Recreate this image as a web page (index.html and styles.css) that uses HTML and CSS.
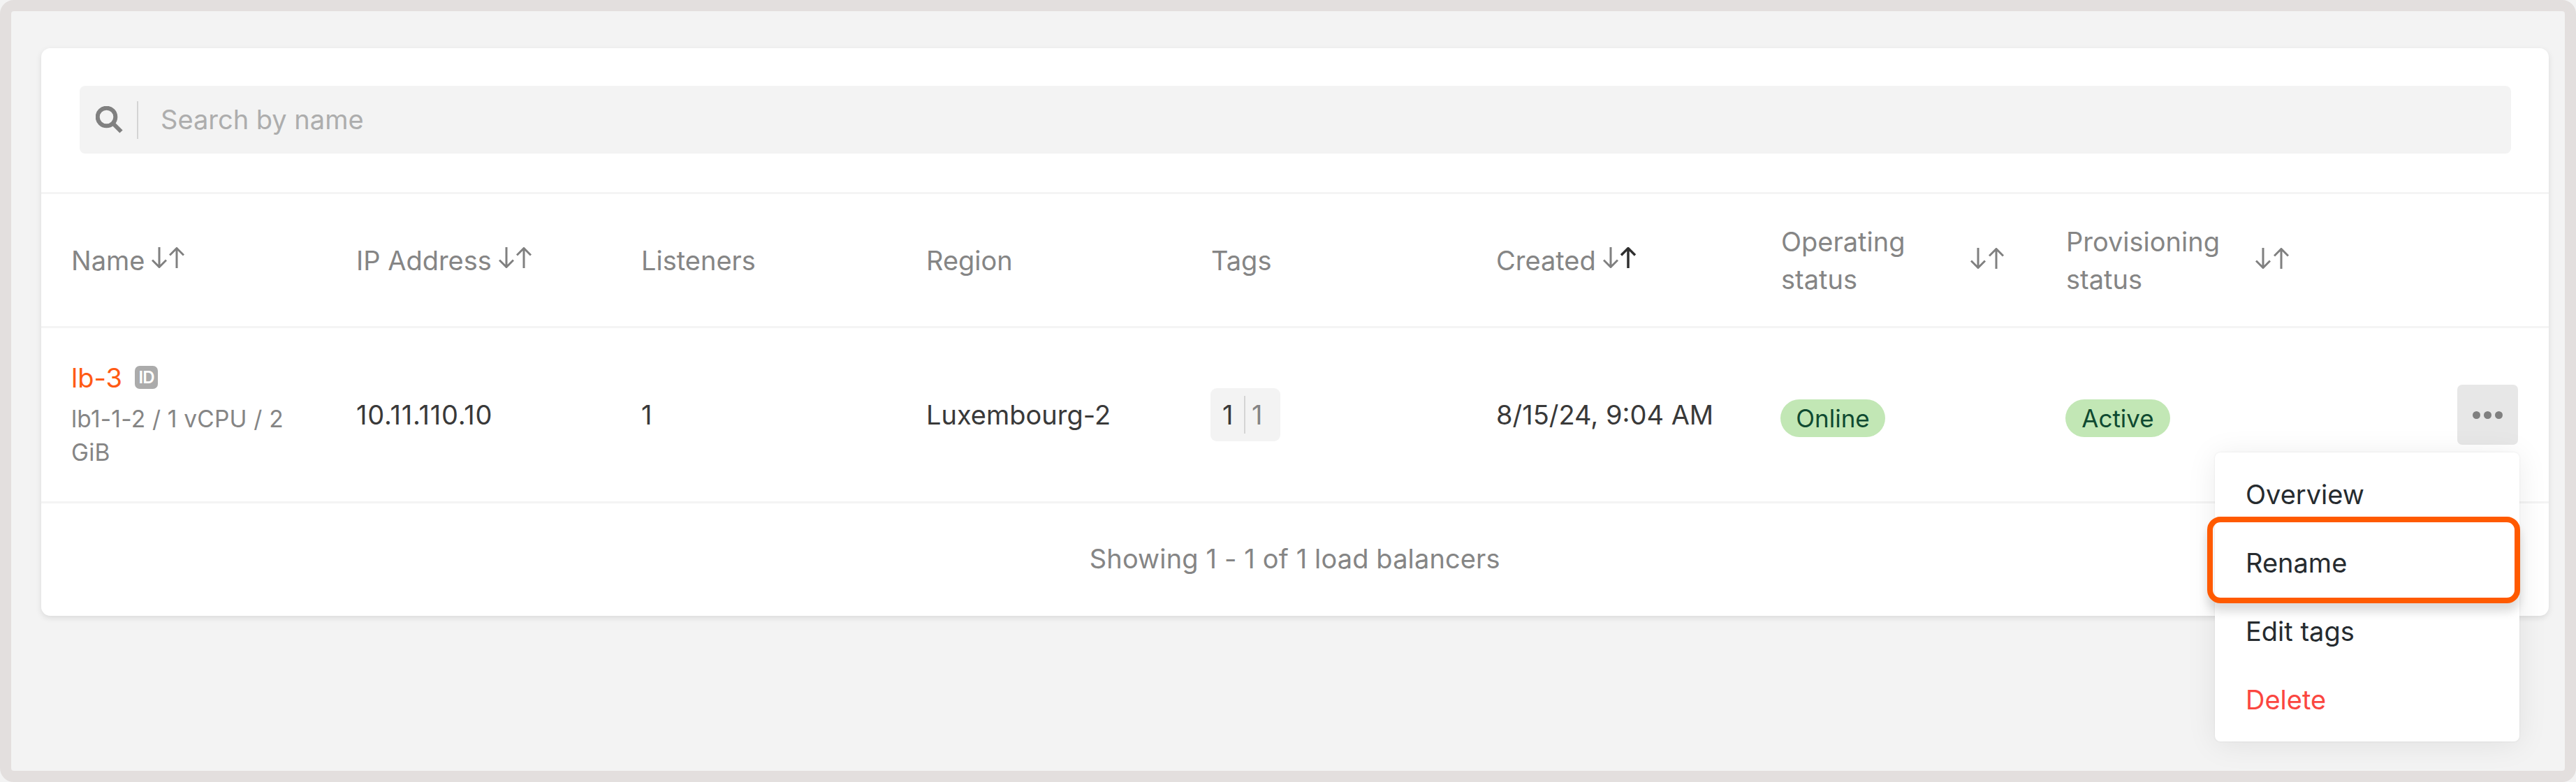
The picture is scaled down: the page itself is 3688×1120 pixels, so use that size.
FILE: index.html
```
<!DOCTYPE html>
<html lang="en">
<head>
<meta charset="utf-8">
<title>Load balancers</title>
<link rel="stylesheet" href="styles.css">
</head>
<body>
<svg class="sprite" aria-hidden="true">
  <symbol id="arrow-down" viewBox="0 0 22 30"><path d="M11 0V29M1 18.500L11 28.500L21 18.500"/></symbol>
  <symbol id="arrow-up" viewBox="0 0 22 30"><path d="M11 30V1M1 11.500L11 1.500L21 11.500"/></symbol>
</svg>
<main class="frame">
  <section class="card">
    <div class="search-area">
      <div class="search">
        <svg class="search-icon" viewBox="0 0 39 39"><circle cx="15.500" cy="15.500" r="12.800"/><path d="M25 25L36.500 36.500"/></svg>
        <span class="search-text">Search by name</span>
      </div>
    </div>
    <div class="row head">
      <div class="cell">Name<span class="sort"><svg><use href="#arrow-down"/></svg><svg><use href="#arrow-up"/></svg></span></div>
      <div class="cell">IP Address<span class="sort"><svg><use href="#arrow-down"/></svg><svg><use href="#arrow-up"/></svg></span></div>
      <div class="cell">Listeners</div>
      <div class="cell">Region</div>
      <div class="cell">Tags</div>
      <div class="cell">Created<span class="sort"><svg><use href="#arrow-down"/></svg><svg class="on"><use href="#arrow-up"/></svg></span></div>
      <div class="cell"><span class="wrap">Operating status</span><span class="sort"><svg><use href="#arrow-down"/></svg><svg><use href="#arrow-up"/></svg></span></div>
      <div class="cell"><span class="wrap">Provisioning status</span><span class="sort"><svg><use href="#arrow-down"/></svg><svg><use href="#arrow-up"/></svg></span></div>
    </div>
    <div class="row item">
      <div class="cell name">
        <div class="title"><a class="link">lb-3</a><span class="id">ID</span></div>
        <div class="flavor">lb1-1-2 / 1 vCPU / 2 GiB</div>
      </div>
      <div class="cell ip">10.11.110.10</div>
      <div class="cell">1</div>
      <div class="cell">Luxembourg-2</div>
      <div class="cell"><div class="tags"><span class="tag-count">1</span><span class="tag-more">1</span></div></div>
      <div class="cell">8/15/24, 9:04 AM</div>
      <div class="cell"><span class="pill">Online</span></div>
      <div class="cell"><span class="pill">Active</span></div>
      <div class="actions">
        <div class="more"><i></i><i></i><i></i></div>
        <div class="menu">
          <div class="option">Overview</div>
          <div class="option marked">Rename</div>
          <div class="option">Edit tags</div>
          <div class="option danger">Delete</div>
        </div>
      </div>
    </div>
    <div class="footer">Showing 1 - 1 of 1 load balancers</div>
  </section>
</main>
</body>
</html>
```
FILE: styles.css
```
*, *::after { box-sizing: border-box; }
body {
  margin: 0;
  background: #f3f3f3;
  color: #393939;
  font: 38px/54px Inter, "Liberation Sans", sans-serif;
}
.sprite { display: none; }
.frame {
  height: 1120px;
  padding: 53px 23px 0 42.5px;
  border: 16px solid #e3dfde;
  border-radius: 20px;
  background: #f3f3f3;
  overflow: hidden;
}
.card {
  height: 812.500px;
  display: flex;
  flex-direction: column;
  background: #fff;
  border-radius: 13px;
  box-shadow: 0 3px 8px rgba(0, 0, 0, .1);
}
.search-area { padding: 54px 54px 55px 55px; }
.search {
  display: flex;
  align-items: center;
  height: 97px;
  padding-left: 23px;
  border-radius: 8px;
  background: #f3f3f3;
}
.search-icon {
  width: 39px;
  height: 39px;
  fill: none;
  stroke: #808080;
  stroke-width: 6;
}
.search-text {
  margin-left: 20px;
  padding-left: 32.5px;
  border-left: 2px solid #d4d4d4;
  color: #adadad;
  line-height: 52px;
  padding-bottom: 2px;
}
.row {
  display: grid;
  grid-template-columns: repeat(8, 408px) 1fr;
  align-items: center;
  padding: 0 44px 0 43.500px;
  border-top: 3px solid #f4f4f4;
}
.head { height: 192px; padding-top: 1px; color: #858585; }
.item { height: 251px; }
.head .cell { display: flex; align-items: center; }
.wrap { width: 271px; padding-right: 40px; }
.sort { display: flex; gap: 3px; margin: -8px 0 0 10px; }
.wrap + .sort { margin: -7px 0 0; gap: 4px; }
.sort svg {
  width: 22px;
  height: 30px;
  fill: none;
  stroke: #808080;
  stroke-width: 3;
}
.sort svg.on { stroke: #2f2f2f; stroke-width: 3.500; }
.title { display: flex; align-items: center; margin-top: -2px; }
.link { color: #ff5a14; }
.id {
  width: 33px;
  height: 33px;
  margin: -2px 0 0 18px;
  border-radius: 7px;
  background: #ababab;
  color: #fff;
  font-size: 24px;
  font-weight: 600;
  line-height: 33px;
  letter-spacing: -1px;
  text-align: center;
}
.flavor {
  width: 330px;
  margin-top: 9px;
  color: #858585;
  font-size: 33.500px;
  line-height: 47.300px;
  letter-spacing: .2px;
}
.ip { letter-spacing: .8px; }
.tags {
  display: flex;
  align-items: center;
  width: 100px;
  height: 76px;
  margin-left: -1px;
  border-radius: 9px;
  background: #f3f3f3;
}
.tag-count { width: 50px; padding-left: 17px; border-right: 2px solid #d4d4d4; }
.tag-more { padding-left: 9px; color: #858585; }
.pill {
  display: block;
  width: 150px;
  height: 54px;
  margin: 10px 0 0 -1px;
  border-radius: 27px;
  background: #c2e7b5;
  color: #0f4a31;
  font-size: 35px;
  text-align: center;
}
.actions { position: relative; justify-self: end; }
.more {
  display: flex;
  align-items: center;
  justify-content: center;
  gap: 5px;
  width: 87px;
  height: 86px;
  border-radius: 7px;
  background: #e7e7e7;
}
.more i { width: 11px; height: 11px; border-radius: 50%; background: #808080; }
.menu {
  position: absolute;
  top: 97px;
  right: -2px;
  width: 436px;
  padding: 11px 0;
  border-radius: 8px;
  background: #fff;
  color: #262b2f;
  box-shadow: 0 4px 44px rgba(0, 0, 0, .08), 0 0 3px rgba(0, 0, 0, .08);
}
.option { position: relative; height: 98px; padding-left: 44px; line-height: 98px; }
.marked::after {
  content: "";
  position: absolute;
  top: -17px;
  left: -11px;
  width: 448px;
  height: 124px;
  border: 8px solid #ff5a00;
  border-radius: 19px;
  box-shadow: 0 12px 14px rgba(0, 0, 0, .14);
}
.danger { color: #fb4640; }
.footer {
  flex: 1;
  display: flex;
  align-items: center;
  justify-content: center;
  padding-bottom: 3px;
  border-top: 3px solid #f4f4f4;
  color: #858585;
  letter-spacing: .13px;
}
```
